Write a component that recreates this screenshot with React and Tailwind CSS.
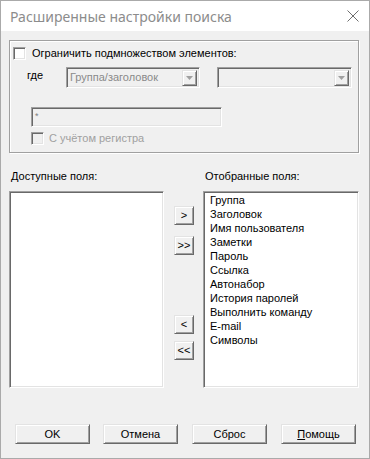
import clsx from "clsx";

const sunken =
  "border border-t-[#a0a0a0] border-l-[#a0a0a0] border-r-white border-b-white shadow-[inset_1px_1px_#696969,inset_-1px_-1px_#e3e3e3]";
const raised =
  "border border-t-[#e3e3e3] border-l-[#e3e3e3] border-r-[#696969] border-b-[#696969] shadow-[inset_1px_1px_#ffffff,inset_-1px_-1px_#a0a0a0]";

function Btn({ children, className }) {
  return (
    <div className={clsx("flex items-center justify-center bg-[#f0f0f0]", raised, className)}>
      {children}
    </div>
  );
}

function Check({ disabled }) {
  return (
    <div
      className={clsx(
        "h-[13px] w-[13px] shrink-0",
        sunken,
        disabled ? "bg-[#f0f0f0]" : "bg-white"
      )}
    />
  );
}

function Combo({ text, className }) {
  return (
    <div className={clsx("flex h-[21px] items-center bg-[#f0f0f0] p-[2px]", sunken, className)}>
      <span className="flex-1 truncate pl-[1px] text-[#8a8a8a]">{text}</span>
      <div className={clsx("flex h-[16px] w-[15px] items-center justify-center", raised)}>
        <svg width="7" height="4" viewBox="0 0 7 4">
          <path d="M0 0h7L3.5 4z" fill="#a0a0a0" />
        </svg>
      </div>
    </div>
  );
}

const selected = [
  "Группа",
  "Заголовок",
  "Имя пользователя",
  "Заметки",
  "Пароль",
  "Ссылка",
  "Автонабор",
  "История паролей",
  "Выполнить команду",
  "E-mail",
  "Символы",
];

export default function App() {
  return (
    <div className="flex h-[459px] w-[370px] flex-col border border-[#aaaaaa] bg-[#f0f0f0] font-['Liberation_Sans',sans-serif] text-[11px] leading-[13px] text-black">
      <div className="flex h-[30px] shrink-0 items-center justify-between bg-white pl-[9px] pr-[10px]">
        <span className="font-['Noto_Sans',sans-serif] text-[14px] text-[#8c8c8c]">
          Расширенные настройки поиска
        </span>
        <svg width="12" height="12" viewBox="0 0 12 12">
          <path d="M0.5 0.5l11 11M11.5 0.5l-11 11" stroke="#6e6e6e" strokeWidth="1" />
        </svg>
      </div>

      <div className="flex flex-1 flex-col">
        {/* group box */}
        <div className="ml-[8px] mt-[9px] flex h-[113px] w-[350px] flex-col border border-[#a0a0a0] shadow-[inset_1px_1px_#ffffff,1px_1px_#ffffff]">
          <div className="ml-[3px] mt-[6px] flex items-center">
            <Check />
            <span className="ml-[6px]">Ограничить подмножеством элементов:</span>
          </div>
          <div className="mt-[7px] flex items-start">
            <span className="ml-[17px] mt-[2px] w-[39px]">где</span>
            <Combo text="Группа/заголовок" className="w-[134px]" />
            <Combo text="" className="ml-[17px] w-[135px]" />
          </div>
          <div className={clsx("ml-[21px] mt-[19px] h-[20px] w-[191px] bg-[#f0f0f0] pl-[3px] pt-[1px]", sunken)}>
            <span className="text-[9px] leading-[9px] text-[#808080]">*</span>
          </div>
          <div className="ml-[21px] mt-[5px] flex items-center">
            <Check disabled />
            <span className="ml-[5px] text-[#a0a0a0]">С учётом регистра</span>
          </div>
        </div>

        {/* labels */}
        <div className="mt-[17px] flex">
          <span className="ml-[10px] w-[194px]">Доступные поля:</span>
          <span>Отобранные поля:</span>
        </div>

        {/* lists */}
        <div className="mt-[8px] flex h-[197px]">
          <div className={clsx("ml-[8px] w-[155px] bg-white", sunken)} />
          <div className="flex w-[39px] flex-col items-center pl-[1px]">
            <Btn className="mt-[15px] h-[19px] w-[20px]">&gt;</Btn>
            <Btn className="mt-[11px] h-[19px] w-[20px]">&gt;&gt;</Btn>
            <Btn className="mt-[60px] h-[19px] w-[20px]">&lt;</Btn>
            <Btn className="mt-[7px] h-[19px] w-[20px]">&lt;&lt;</Btn>
          </div>
          <div className={clsx("w-[156px] bg-white pl-[6px] pt-[1px]", sunken)}>
            {selected.map((s) => (
              <div key={s} className="h-[14px] leading-[14px]">
                {s}
              </div>
            ))}
          </div>
        </div>

        {/* buttons */}
        <div className="ml-[14px] mt-[36px] flex">
          <Btn className="h-[20px] w-[75px]">OK</Btn>
          <Btn className="ml-[13px] h-[20px] w-[75px]">Отмена</Btn>
          <Btn className="ml-[14px] h-[20px] w-[75px]">Сброс</Btn>
          <Btn className="ml-[14px] h-[20px] w-[75px]">
            <span>
              <span className="underline">П</span>омощь
            </span>
          </Btn>
        </div>
      </div>
    </div>
  );
}
